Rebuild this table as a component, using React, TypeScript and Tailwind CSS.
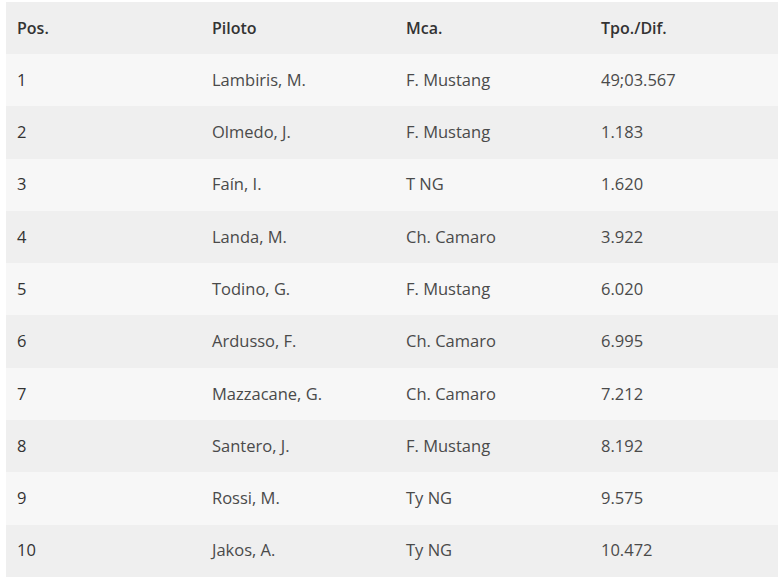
import React from "react";

const rows: [string, string, string, string][] = [
  ["1", "Lambiris, M.", "F. Mustang", "49;03.567"],
  ["2", "Olmedo, J.", "F. Mustang", "1.183"],
  ["3", "Faín, I.", "T NG", "1.620"],
  ["4", "Landa, M.", "Ch. Camaro", "3.922"],
  ["5", "Todino, G.", "F. Mustang", "6.020"],
  ["6", "Ardusso, F.", "Ch. Camaro", "6.995"],
  ["7", "Mazzacane, G.", "Ch. Camaro", "7.212"],
  ["8", "Santero, J.", "F. Mustang", "8.192"],
  ["9", "Rossi, M.", "Ty NG", "9.575"],
  ["10", "Jakos, A.", "Ty NG", "10.472"],
];

export default function App() {
  return (
    <div
      className="w-[778px] h-[578px] overflow-hidden bg-white pt-[2px] pl-[6px]"
      style={{ fontFamily: '"Open Sans", sans-serif' }}
    >
      <div className="w-[772px]">
        <div className="grid grid-cols-[195px_194px_195px_1fr] h-[52px] items-center bg-[#efefef] text-[#333] font-semibold text-[16px]">
          <div className="pl-[11px]">Pos.</div>
          <div className="pl-[11px]">Piloto</div>
          <div className="pl-[11px]">Mca.</div>
          <div className="pl-[11px]">Tpo./Dif.</div>
        </div>
        {rows.map((r, i) => (
          <div
            key={i}
            className={
              "grid grid-cols-[195px_194px_195px_1fr] h-[52.3px] items-center text-[#4a4a4a] text-[16.5px] " +
              (i % 2 === 0 ? "bg-[#f7f7f7]" : "bg-[#efefef]")
            }
          >
            <div className="pl-[11px] font-medium text-[#333]">{r[0]}</div>
            <div className="pl-[11px]">{r[1]}</div>
            <div className="pl-[11px]">{r[2]}</div>
            <div className="pl-[11px]">{r[3]}</div>
          </div>
        ))}
      </div>
    </div>
  );
}
